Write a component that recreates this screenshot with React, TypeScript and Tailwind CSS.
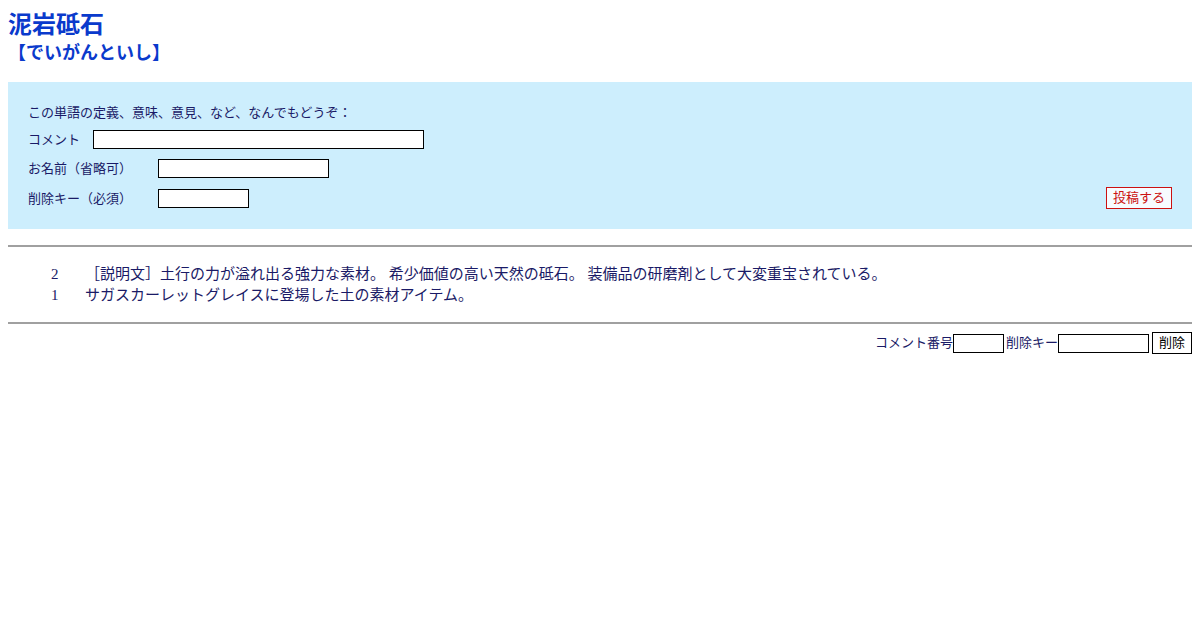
import React from "react";

const font = { fontFamily: '"Liberation Serif", "Noto Sans CJK JP", serif' };

export default function App() {
  return (
    <div className="w-[1200px] h-[630px] bg-white text-[#1a1a66]" style={font}>
      <div className="px-2 pt-2">
        <h1 className="text-[24px] leading-[30px] font-bold text-[#0a3acc] [font-family:'Noto_Sans_CJK_JP',sans-serif]">泥岩砥石</h1>
        <div className="text-[18px] leading-[26px] font-bold text-[#0a3acc] [font-family:'Noto_Sans_CJK_JP',sans-serif]">【でいがんといし】</div>
      </div>

      <div className="mx-2 mt-[18px] bg-[#cdeefd] px-5 pt-[21px] pb-[20px] text-[13px] text-[#1a1a66]">
        <div className="leading-[20px]">この単語の定義、意味、意見、など、なんでもどうぞ：</div>
        <div className="mt-[7px] flex items-center h-[19px]">
          <span className="w-[65px] leading-[19px]">コメント</span>
          <input className="w-[331px] h-[19px] border border-black bg-white" />
        </div>
        <div className="mt-[10px] flex items-center h-[19px]">
          <span className="w-[130px] leading-[19px]">お名前（省略可）</span>
          <input className="w-[171px] h-[19px] border border-black bg-white" />
        </div>
        <div className="mt-[9px] flex items-center justify-between h-[22px]">
          <div className="flex items-center">
            <span className="w-[130px] leading-[19px]">削除キー（必須）</span>
            <input className="w-[91px] h-[19px] border border-black bg-white" />
          </div>
          <button className="w-[66px] h-[22px] border border-[#cc1111] bg-[#f7fbff] text-[#cc1111] text-[13px] leading-[20px]">投稿する</button>
        </div>
      </div>

      <div className="mx-2 mt-[16px] border-t-2 border-[#a0a0a0]" />

      <div className="pt-[17px] pb-[16px] text-[15px] leading-[21px] text-[#1a1a66]">
        <div className="flex">
          <span className="w-[85px] pl-[51px]">2</span>
          <span>［説明文］土行の力が溢れ出る強力な素材。 希少価値の高い天然の砥石。 装備品の研磨剤として大変重宝されている。</span>
        </div>
        <div className="flex">
          <span className="w-[85px] pl-[51px]">1</span>
          <span>サガスカーレットグレイスに登場した土の素材アイテム。</span>
        </div>
      </div>

      <div className="mx-2 border-t-2 border-[#a0a0a0]" />

      <div className="mx-2 mt-[8px] flex justify-end items-center text-[13px] text-[#1a1a66]">
        <span>コメント番号</span>
        <input className="w-[51px] h-[19px] border border-black bg-white" />
        <span className="ml-[2px]">削除キー</span>
        <input className="w-[91px] h-[19px] border border-black bg-white" />
        <button className="ml-[3px] w-[40px] h-[22px] border border-black bg-white text-black text-[13px] leading-[20px]">削除</button>
      </div>
    </div>
  );
}
